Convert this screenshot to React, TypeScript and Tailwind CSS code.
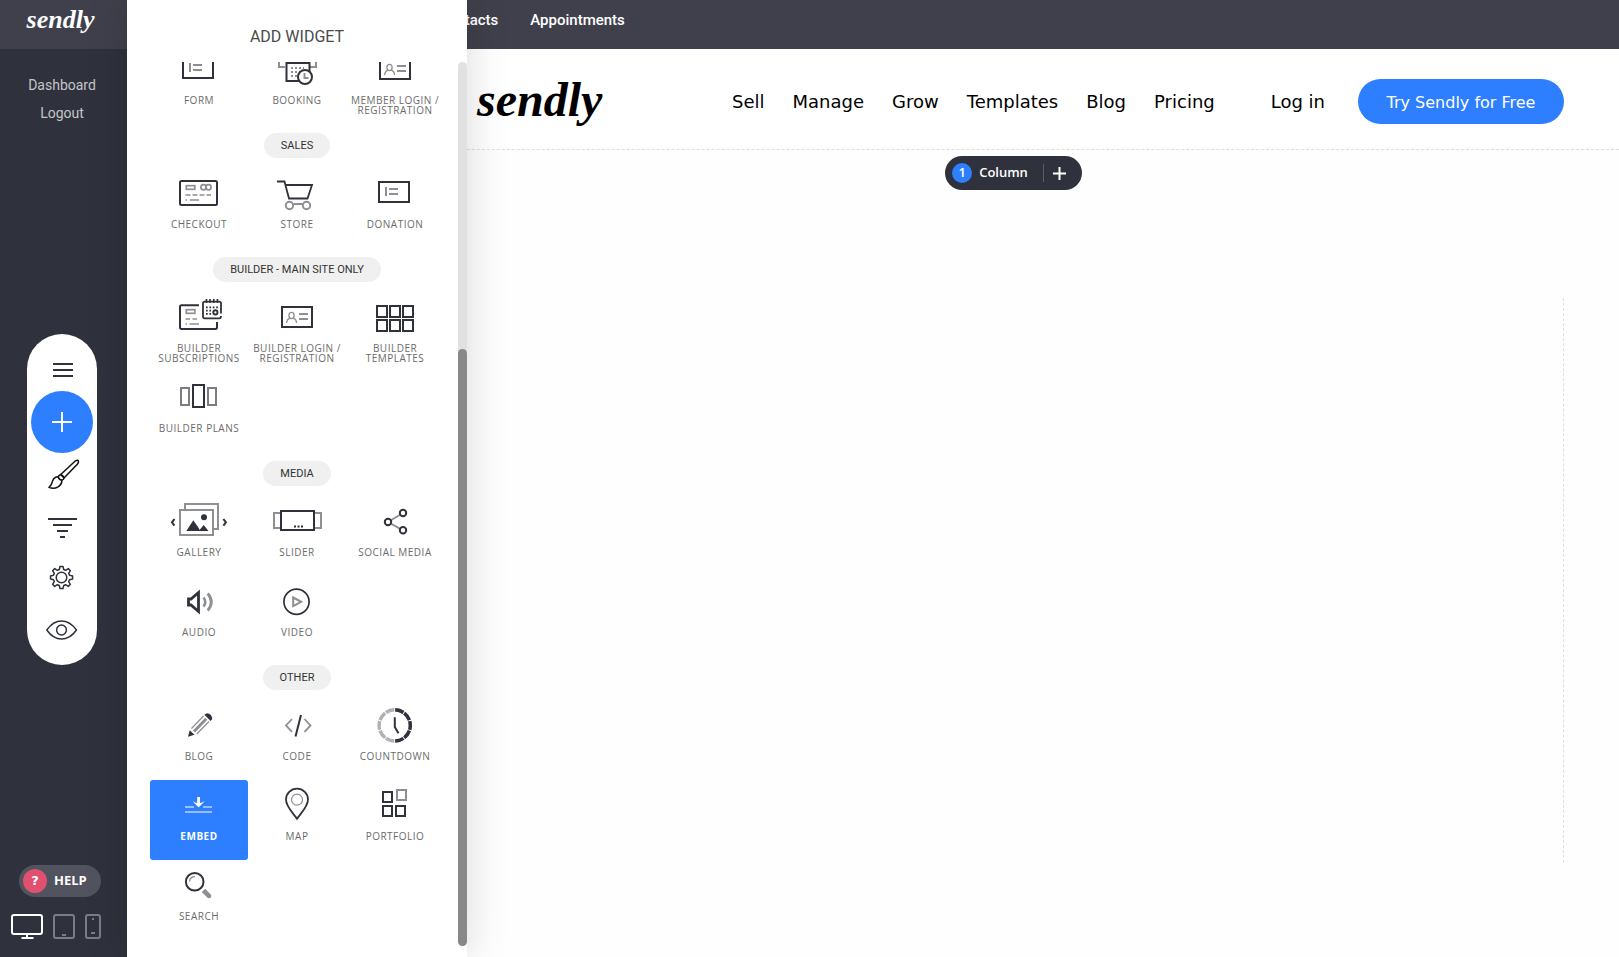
import type { ReactNode } from "react";

const D = "#2f323c";
const G = "#8f8f93";

function Glyph({ children }: { children: ReactNode }) {
  return (
    <svg width="60" height="51" viewBox="0 0 60 51" fill="none" stroke={D} strokeWidth="2" aria-hidden="true">
      {children}
    </svg>
  );
}

const formIcon = (
  <Glyph>
    <rect x="14" y="14" width="30" height="20" />
    <path d="M21 19v9M24 21h9M24 26h9" stroke={G} />
  </Glyph>
);

const loginIcon = (
  <Glyph>
    <rect x="15" y="15" width="30" height="20" />
    <g stroke={G}>
      <ellipse cx="24.5" cy="23.5" rx="2.6" ry="3.1" strokeWidth="1.3" />
      <path d="M19.6 31c.3-3 1.7-4.3 3.4-4.6M29.600 31c-.3-3-1.700-4.300-3.400-4.600" strokeWidth="1.3" />
      <path d="M32 22h9M32 27h9" />
    </g>
  </Glyph>
);

const icons: Record<string, ReactNode> = {
  form: formIcon,
  login: loginIcon,
  booking: (
    <Glyph>
      <path d="M18 23h-6V10M43 23h6V10" stroke={G} />
      <rect x="19.5" y="19" width="23" height="18" fill="#fff" />
      <path d="M24 24h13M24 28h13M24 32h13" stroke={G} strokeDasharray="2 2" />
      <circle cx="38" cy="33" r="7" fill="#fff" />
      <path d="M37.500 29v5h4" stroke={G} />
    </Glyph>
  ),
  checkout: (
    <Glyph>
      <rect x="11" y="13" width="37" height="24" rx="1.5" />
      <g stroke={G} strokeWidth="1.7">
        <rect x="17.3" y="17.7" width="8.5" height="3.6" />
        <circle cx="34.5" cy="19.3" r="2.6" />
        <circle cx="39.5" cy="19.3" r="2.6" />
        <path d="M16.500 27H42" strokeDasharray="5 2" />
        <path d="M16.500 32h1.500M20.700 32H30" />
      </g>
    </Glyph>
  ),
  store: (
    <Glyph>
      <path d="M10 13.500h7.500L22 30.500h18.500l4.500-13.500H18.500" strokeWidth="1.8" />
      <g stroke={G}>
        <circle cx="22.5" cy="37.5" r="3.7" />
        <circle cx="39.5" cy="37.5" r="3.7" />
        <path d="M26.500 36h9" />
      </g>
    </Glyph>
  ),
  subscriptions: (
    <Glyph>
      <path d="M30 13.300H12.500Q11 13.300 11 15v20.300Q11 37 12.500 37H46.500Q48 37 48 35.300V30" />
      <g stroke={G} strokeWidth="1.7">
        <rect x="17.3" y="17.7" width="8.5" height="3.6" />
        <path d="M16.500 27h4.500M23.500 27H28M16.500 32h1.500M20.500 32H30" />
      </g>
      <path d="M52 21.500V11.500Q52 9.700 50.200 9.700H35.800Q34 9.700 34 11.500V24.500Q34 26.300 35.800 26.300H50.200Q52 26.300 52 24" strokeWidth="1.8" />
      <path d="M37.500 7v4M41 7v4M44.700 7v4M48.400 7v4" strokeWidth="1.6" />
      <path d="M37 15.300h12M37 18.700h6M37 21.900h6" strokeDasharray="1.7 1.7" strokeWidth="1.7" />
      <circle cx="46.4" cy="20.4" r="2.1" strokeWidth="1.9" />
    </Glyph>
  ),
  templates: (
    <Glyph>
      {[12, 25, 38].map((x) => (
        <g key={x}>
          <rect x={x} y="14" width="10" height="11" />
          <rect x={x} y="28" width="10" height="11" />
        </g>
      ))}
    </Glyph>
  ),
  plans: (
    <Glyph>
      <rect x="12" y="16" width="8" height="17" stroke="#7c7d83" />
      <rect x="39" y="16" width="8" height="17" stroke="#7c7d83" />
      <rect x="24" y="13" width="11" height="22" />
    </Glyph>
  ),
  gallery: (
    <Glyph>
      <g stroke={G}>
        <rect x="16" y="8" width="33" height="25" />
        <rect x="11" y="14" width="33" height="25" fill="#fff" />
      </g>
      <circle cx="35" cy="21.3" r="3" fill={D} stroke="none" />
      <path d="M17.300 35l7-10.700 5.400 7.600 1.300 3.100zM29.700 35l5-6 4.800 6z" fill={D} stroke="none" />
      <path d="M5.400 23L3 26.300l2.400 3.300M54.400 23l2.500 3.300-2.500 3.300" />
    </Glyph>
  ),
  slider: (
    <Glyph>
      <path d="M13 17H7v15h6M48 17h6v15h-6" stroke={G} />
      <rect x="14" y="15" width="33" height="19" />
      <path d="M27 30.500h2M30.500 30.500h2M34 30.500h2" />
    </Glyph>
  ),
  social: (
    <Glyph>
      <path d="M23 26l15-9M23 26l15 8.300" stroke={G} />
      <circle cx="23" cy="26" r="3.2" fill="#fff" />
      <circle cx="38" cy="17" r="3.2" fill="#fff" />
      <circle cx="38" cy="34.2" r="3.2" fill="#fff" />
    </Glyph>
  ),
  audio: (
    <Glyph>
      <path d="M19.500 23h2.500l7.500-6.500v19L22 29h-2.500z" strokeWidth="2.8" />
      <path d="M34.500 21.500q3.500 4.500 0 9" stroke={G} strokeWidth="2.6" />
      <path d="M38.700 17.500q7.200 8.500 0 17" stroke={G} strokeWidth="2.8" />
    </Glyph>
  ),
  video: (
    <Glyph>
      <circle cx="29.5" cy="25.7" r="12.6" strokeWidth="1.7" />
      <path d="M26.200 21.500l8 4.300-8 4.300z" stroke={G} />
    </Glyph>
  ),
  blog: (
    <Glyph>
      <path d="M19 36.700l1.700-6.500 4.800 4.600z" fill={D} stroke="none" />
      <path d="M35.400 14.800l2.500-1.500q5 .5 5.400 5.800L41.600 21z" fill={D} stroke="none" />
      <path d="M22.500 28.500L34.500 16M27.800 34L40 21.500" stroke={G} strokeWidth="1.2" />
      <path d="M25 31.500L37.300 18.700" stroke={G} strokeWidth="3" />
    </Glyph>
  ),
  code: (
    <Glyph>
      <path d="M25 19l-6 6.400 6 6.400M37.500 19l6 6.400-6 6.400" stroke={G} strokeWidth="1.8" />
      <path d="M34 15l-5.500 21.500" />
    </Glyph>
  ),
  countdown: (
    <Glyph>
      <g strokeWidth="3.4" transform="rotate(-90 29.7 25.4)">
        <circle cx="29.7" cy="25.4" r="15.6" stroke="#b0b1b5" pathLength="120" strokeDasharray="10.8 1.2" strokeDashoffset="-.6" />
        <circle cx="29.7" cy="25.4" r="15.6" pathLength="120" strokeDasharray="10.8 1.2 10.8 1.2 10.8 1.2 10.8 1.2 10.8 61.2" strokeDashoffset="-.6" />
      </g>
      <path d="M29.800 17.300V27l3.700 6.300" />
    </Glyph>
  ),
  embed: (
    <Glyph>
      <path d="M16 27h9M34 27h9M16 32h27" stroke="#95bfff" />
      <path d="M29.600 17v9" stroke="#fff" strokeWidth="2.8" />
      <path d="M23.700 21.300q3.200 2 5.900 2t6-2l-6 6.200z" fill="#fff" stroke="none" />
    </Glyph>
  ),
  map: (
    <Glyph>
      <path d="M30 38.800C27 34 19 27 19 19.500a11 10.800 0 0 1 22 0C41 27 33 34 30 38.800z" strokeWidth="1.8" />
      <circle cx="30" cy="19.7" r="5.5" stroke={G} strokeWidth="1.2" />
    </Glyph>
  ),
  portfolio: (
    <Glyph>
      <rect x="18" y="12" width="9" height="10" />
      <rect x="32" y="10" width="9" height="10" stroke={G} />
      <rect x="18" y="26" width="9" height="10" />
      <rect x="31" y="26" width="9" height="10" />
    </Glyph>
  ),
  search: (
    <Glyph>
      <circle cx="25.7" cy="21.7" r="8.8" />
      <path d="M20.500 21.500q.5-4.800 5.500-5" stroke={G} strokeWidth="1.3" />
      <path d="M34.500 30.500l5.200 5.200" stroke={G} strokeWidth="4.6" />
      <circle cx="40" cy="36" r="2.3" fill={G} stroke="none" />
    </Glyph>
  ),
};

type Widget = { label: string; icon: string; active?: boolean };
type Group = { title?: string; items: Widget[] };

const groups: Group[] = [
  {
    items: [
      { label: "FORM", icon: "form" },
      { label: "BOOKING", icon: "booking" },
      { label: "MEMBER LOGIN / REGISTRATION", icon: "login" },
    ],
  },
  {
    title: "SALES",
    items: [
      { label: "CHECKOUT", icon: "checkout" },
      { label: "STORE", icon: "store" },
      { label: "DONATION", icon: "form" },
    ],
  },
  {
    title: "BUILDER - MAIN SITE ONLY",
    items: [
      { label: "BUILDER SUBSCRIPTIONS", icon: "subscriptions" },
      { label: "BUILDER LOGIN / REGISTRATION", icon: "login" },
      { label: "BUILDER TEMPLATES", icon: "templates" },
      { label: "BUILDER PLANS", icon: "plans" },
    ],
  },
  {
    title: "MEDIA",
    items: [
      { label: "GALLERY", icon: "gallery" },
      { label: "SLIDER", icon: "slider" },
      { label: "SOCIAL MEDIA", icon: "social" },
      { label: "AUDIO", icon: "audio" },
      { label: "VIDEO", icon: "video" },
    ],
  },
  {
    title: "OTHER",
    items: [
      { label: "BLOG", icon: "blog" },
      { label: "CODE", icon: "code" },
      { label: "COUNTDOWN", icon: "countdown" },
      { label: "EMBED", icon: "embed", active: true },
      { label: "MAP", icon: "map" },
      { label: "PORTFOLIO", icon: "portfolio" },
      { label: "SEARCH", icon: "search" },
    ],
  },
];

function WidgetTile({ label, icon, active }: Widget) {
  return (
    <button
      type="button"
      className={`flex h-20 flex-col items-center rounded-[3px] text-center font-['Open_Sans',sans-serif] text-[10px] leading-[10px] tracking-wider ${
        active ? "bg-[#2d7fff] font-bold text-white" : "text-[#6b6b6b]"
      }`}
    >
      {icons[icon]}
      <span className="w-full">{label}</span>
    </button>
  );
}

function WidgetPanel() {
  return (
    <aside className="absolute inset-y-0 left-[127px] z-10 flex w-[340px] flex-col bg-white pb-[11px] shadow-[0_0_40px_rgba(0,0,0,0.15)]">
      <h2 className="flex h-[62px] shrink-0 items-center justify-center pt-3 font-[Roboto,sans-serif] text-base text-[#4a4a4a]">
        ADD WIDGET
      </h2>
      <div className="flex min-h-0 flex-1">
        <div className="flex min-w-0 flex-1 flex-col justify-end overflow-hidden pr-[14px] pb-[6px] pl-[23px]">
          {groups.map((group, i) => (
            <section key={i} className="shrink-0">
              {group.title && (
                <div className="flex justify-center pt-[9px] pb-[10px]">
                  <h3 className="rounded-full bg-[#f0f0f0] px-[17px] font-[Roboto,sans-serif] text-[11px] leading-[25px] text-[#333]">
                    {group.title}
                  </h3>
                </div>
              )}
              <div className="grid grid-cols-3">
                {group.items.map((item) => (
                  <WidgetTile key={item.label} {...item} />
                ))}
              </div>
            </section>
          ))}
        </div>
        <div className="flex w-[9px] flex-col justify-end rounded-full bg-[#e1e1e1]">
          <div className="h-[67.5%] rounded-full bg-[#888]" />
        </div>
      </div>
    </aside>
  );
}

const tools: { name: string; icon: ReactNode; primary?: boolean }[] = [
  {
    name: "Menu",
    icon: <path d="M7 10h20M7 16h20M7 22h20" strokeWidth="2" />,
  },
  {
    name: "Add widget",
    primary: true,
    icon: <path d="M6 16h20M16 6v20" stroke="#fff" strokeWidth="2" />,
  },
  {
    name: "Design",
    icon: (
      <g stroke="#111" strokeWidth="1.5" strokeLinejoin="round">
        <path d="M14.700 16.500L29 3.200q3.400-2 3.500.3 0 1.300-1.200 2.800L18 20z" />
        <path d="M14.700 16.500q-2.300.7-2.300 2.700.8 2.700 3.600 2.900 1.800-.3 2-2.100-.7-2.700-3.300-3.500z" />
        <path d="M12.400 18.700q-4.200-.2-5.700 4-.8 4.300-3.700 6.700 4.800 2 9-.5 3.800-2.400 4-6.800" />
      </g>
    ),
  },
  {
    name: "Sections",
    icon: <path d="M2 9h29M7 15h19M11 21h11M14 27h5" strokeWidth="2" />,
  },
  {
    name: "Settings",
    icon: (
      <g strokeWidth="1.5" strokeLinejoin="round">
        <circle cx="15.5" cy="15.5" r="5.3" />
        <path d="M14 4.500h3l.7 3 1.900.8 2.700-1.700 2.100 2.100-1.700 2.700.8 1.900 3.100.7v3l-3.100.7-.8 1.900 1.700 2.700-2.100 2.100-2.700-1.700-1.900.8-.7 3.100h-3l-.7-3.100-1.900-.8-2.700 1.700-2.100-2.100 1.700-2.700-.8-1.900-3-.7v-3l3-.7.8-1.900-1.700-2.700 2.100-2.100 2.700 1.700 1.900-.8z" />
      </g>
    ),
  },
  {
    name: "Preview",
    icon: (
      <g strokeWidth="1.5">
        <path d="M.8 16Q7 7 15.500 7t15 9q-6.500 9-15 9T.8 16z" strokeLinejoin="round" />
        <circle cx="15.5" cy="16" r="4.9" />
      </g>
    ),
  },
];

function Sidebar() {
  return (
    <aside className="flex w-[127px] shrink-0 flex-col bg-[#2f323c]">
      <div className="flex h-[49px] shrink-0 justify-center bg-[#3f404b] pr-[6px] font-['Liberation_Serif',serif] text-[26px] leading-10 font-bold text-white italic">
        sendly
      </div>
      <div className="flex flex-1 flex-col items-center pr-[3px] pb-[18px]">
        <nav className="flex flex-col items-center pt-[22px] pb-[6px] font-[Roboto,sans-serif] text-sm leading-7 text-[#c4c5c8]">
          <a href="#dashboard">Dashboard</a>
          <a href="#logout">Logout</a>
        </nav>
        <div className="my-auto flex w-[70px] flex-col items-center rounded-full bg-white pt-[10px] pb-[9px]">
          {tools.map((tool) => (
            <button
              key={tool.name}
              type="button"
              aria-label={tool.name}
              className={`flex items-center justify-center ${
                tool.primary ? "-my-[5px] size-[62px] rounded-full bg-[#2d7fff]" : "size-[52px]"
              }`}
            >
              <svg
                width="32"
                height="32"
                viewBox="0 0 32 32"
                fill="none"
                stroke={D}
                className="overflow-visible"
                aria-hidden="true"
              >
                {tool.icon}
              </svg>
            </button>
          ))}
        </div>
        <button
          type="button"
          className="mr-1 flex h-8 w-[82px] items-center gap-[7px] rounded-full bg-[#51535e] pl-1 font-['Open_Sans',sans-serif] text-[13px] font-bold text-white"
        >
          <span className="flex size-6 items-center justify-center rounded-full bg-[#e2506f] font-['DejaVu_Sans',sans-serif] text-[13px]">
            ?
          </span>
          HELP
        </button>
        <div className="mt-[17px] flex items-end gap-[10px] pr-3">
          <button type="button" aria-label="Desktop view">
            <svg width="32" height="25" viewBox="0 0 32 25" fill="none" stroke="#fff" strokeWidth="2" className="block">
              <rect x="1" y="1" width="30" height="19" rx="2" />
              <path d="M16 20v4M10.500 24h12" />
            </svg>
          </button>
          <button type="button" aria-label="Tablet view">
            <svg width="22" height="25" viewBox="0 0 22 25" fill="none" stroke="#7b7d84" strokeWidth="2" className="block">
              <rect x="1" y="1" width="20" height="23" rx="2" />
              <path d="M9 21h4" />
            </svg>
          </button>
          <button type="button" aria-label="Phone view">
            <svg width="16" height="25" viewBox="0 0 16 25" fill="none" stroke="#7b7d84" strokeWidth="2" className="block">
              <rect x="1" y="1" width="14" height="23" rx="2" />
              <path d="M7 5h2M6 19h4" />
            </svg>
          </button>
        </div>
      </div>
    </aside>
  );
}

const siteLinks = ["Sell", "Manage", "Grow", "Templates", "Blog", "Pricing"];

export default function App() {
  return (
    <div className="relative flex h-screen overflow-hidden bg-[#fefefe]">
      <Sidebar />
      <WidgetPanel />
      <div className="flex min-w-0 flex-1 flex-col">
        <nav className="flex h-[49px] shrink-0 gap-8 bg-[#3f404b] pl-[311px] font-[Roboto,sans-serif] text-[15px] leading-10 font-medium text-white">
          <a href="#contacts">Contacts</a>
          <a href="#appointments">Appointments</a>
        </nav>
        <header className="flex h-[101px] shrink-0 items-center border-b border-dashed border-[#dedede] bg-white pt-[5px] pr-[55px] pl-[350px] font-['DejaVu_Sans',sans-serif] text-[18px] text-black">
          <a href="#home" className="pb-1 font-['Liberation_Serif',serif] text-5xl font-bold italic">
            sendly
          </a>
          <nav className="ml-auto flex items-center gap-7">
            {siteLinks.map((link) => (
              <a key={link} href={`#${link.toLowerCase()}`}>
                {link}
              </a>
            ))}
            <a href="#login" className="ml-7">
              Log in
            </a>
          </nav>
          <a
            href="#try"
            className="ml-[33px] flex h-[45px] w-[206px] shrink-0 items-center justify-center rounded-full bg-[#2d7fff] pt-[2px] text-base text-white"
          >
            Try Sendly for Free
          </a>
        </header>
        <main className="flex flex-1 flex-col items-center pt-[6px] pr-[55px] pb-[94px] pl-[336px]">
          <div className="flex h-[34px] items-center rounded-full bg-[#2f323c] pr-4 pl-[7px] font-['Open_Sans',sans-serif] text-[13px] font-semibold text-white">
            <span className="flex size-5 items-center justify-center rounded-full bg-[#2d7fff]">1</span>
            <span className="ml-[7px]">Column</span>
            <span className="ml-[15px] h-[18px] w-px bg-[#5a5c66]" />
            <button type="button" aria-label="Add column" className="ml-[9px]">
              <svg width="13" height="13" viewBox="0 0 13 13" stroke="#fff" strokeWidth="2" className="block">
                <path d="M0 6.500h13M6.500 0v13" />
              </svg>
            </button>
          </div>
          <div className="mt-[108px] w-full flex-1 border-r border-dashed border-[#dedede]" />
        </main>
      </div>
    </div>
  );
}
